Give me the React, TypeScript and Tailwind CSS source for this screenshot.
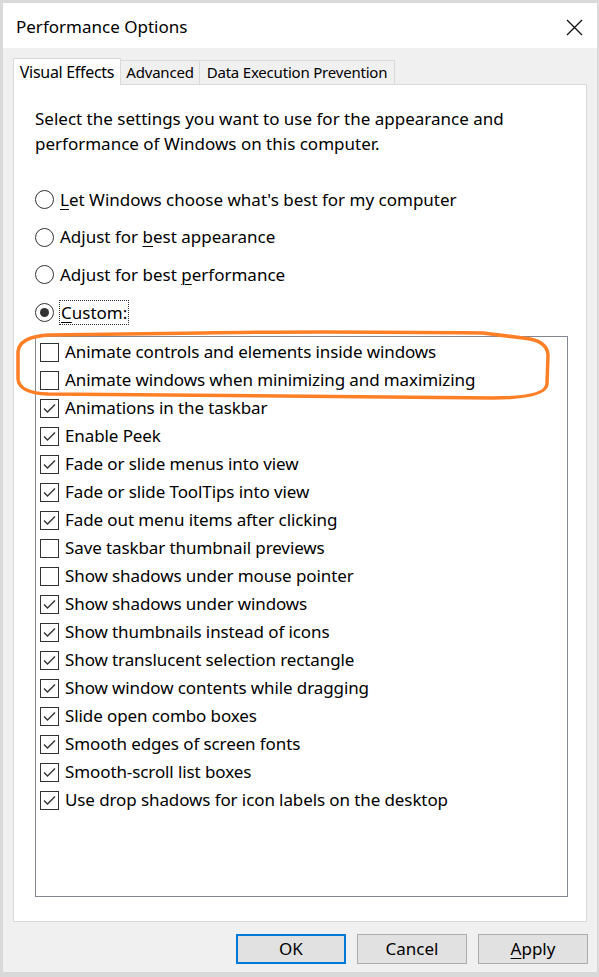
import React from "react";

const items: [string, boolean][] = [
  ["Animate controls and elements inside windows", false],
  ["Animate windows when minimizing and maximizing", false],
  ["Animations in the taskbar", true],
  ["Enable Peek", true],
  ["Fade or slide menus into view", true],
  ["Fade or slide ToolTips into view", true],
  ["Fade out menu items after clicking", true],
  ["Save taskbar thumbnail previews", false],
  ["Show shadows under mouse pointer", false],
  ["Show shadows under windows", true],
  ["Show thumbnails instead of icons", true],
  ["Show translucent selection rectangle", true],
  ["Show window contents while dragging", true],
  ["Slide open combo boxes", true],
  ["Smooth edges of screen fonts", true],
  ["Smooth-scroll list boxes", true],
  ["Use drop shadows for icon labels on the desktop", true],
];

function Radio({ checked, children }: { checked?: boolean; children: React.ReactNode }) {
  return (
    <div className="flex items-center h-[25px]">
      <div className="w-[19px] h-[19px] rounded-full border border-[#333] flex items-center justify-center bg-white">
        {checked && <div className="w-[9px] h-[9px] rounded-full bg-[#333]" />}
      </div>
      <div className="ml-[6px]">{children}</div>
    </div>
  );
}

function Check({ checked, label }: { checked: boolean; label: string }) {
  return (
    <div className="flex items-center h-[28px]">
      <div className="w-[19px] h-[19px] border border-[#333] bg-white flex items-center justify-center">
        {checked && (
          <svg width="17" height="17" viewBox="0 0 17 17">
            <path d="M3 8.5 L6.5 12 L14 4.5" fill="none" stroke="#333" strokeWidth="1.4" />
          </svg>
        )}
      </div>
      <span className="ml-[6px] tracking-[-0.1px]">{label}</span>
    </div>
  );
}

export default function App() {
  return (
    <div
      className="w-[599px] h-[977px] bg-[#d9d9d9] pt-[3px] pl-[3px] pr-[2px] overflow-hidden text-black"
      style={{ fontFamily: '"Noto Sans", "Open Sans", sans-serif' }}
    >
      <div className="relative h-[969px] flex flex-col bg-[#f0f0f0] text-[17px]">
        {/* title bar */}
        <div className="h-[45px] bg-white flex items-center justify-between pl-[13px] pr-[14px] pt-[3px]">
          <span className="text-[17px]">Performance Options</span>
          <svg width="17" height="17" viewBox="0 0 17 17">
            <path d="M1 1 L16 16 M16 1 L1 16" stroke="#111" strokeWidth="1.3" fill="none" />
          </svg>
        </div>
        {/* body */}
        <div className="flex flex-col pt-[10px] pl-[10px] pr-[10px]">
          {/* tabs */}
          <div className="flex items-end h-[27px] relative z-10 text-[15px] tracking-[-0.2px] whitespace-nowrap">
            <div className="shrink-0 w-[108px] h-[27px] bg-white border border-[#d9d9d9] border-b-0 flex items-center justify-center text-[16px] tracking-[-0.3px]">
              Visual Effects
            </div>
            <div className="shrink-0 w-[79px] h-[24px] mb-[1px] border border-[#d9d9d9] border-l-0 border-b-0 flex items-center justify-center">
              Advanced
            </div>
            <div className="shrink-0 w-[195px] h-[24px] mb-[1px] border border-[#d9d9d9] border-l-0 border-b-0 flex items-center justify-center">
              Data Execution Prevention
            </div>
          </div>
          {/* panel */}
          <div className="h-[838px] -mt-[1px] bg-white border border-[#d9d9d9] pl-[21px] pr-[18px] pt-[21px] flex flex-col">
            <p className="leading-[25px]">
              Select the settings you want to use for the appearance and performance of Windows on this computer.
            </p>
            <div className="flex flex-col gap-[12.7px] mt-[31px]">
              <Radio>
                <span className="underline underline-offset-[3px] decoration-1">L</span>et Windows choose what's best for my computer
              </Radio>
              <Radio>
                Adjust for <span className="underline underline-offset-[3px] decoration-1">b</span>est appearance
              </Radio>
              <Radio>
                Adjust for best <span className="underline underline-offset-[3px] decoration-1">p</span>erformance
              </Radio>
              <Radio checked>
                <span className="outline outline-1 outline-dotted outline-[#333] px-[1px]">
                  <span className="underline underline-offset-[3px] decoration-1">C</span>ustom:
                </span>
              </Radio>
            </div>
            <div className="mt-[11px] h-[561px] border border-[#828790] pl-[4px] pt-[1px] flex flex-col">
              {items.map(([l, c]) => (
                <Check key={l} label={l} checked={c} />
              ))}
            </div>
          </div>
          {/* buttons */}
          <div className="flex justify-end gap-[11px] mt-[12px] mr-[-1px]">
            <button className="w-[110px] h-[30px] bg-[#e1e1e1] border-2 border-[#0078d7]">OK</button>
            <button className="w-[110px] h-[30px] bg-[#e1e1e1] border border-[#adadad]">Cancel</button>
            <button className="w-[110px] h-[30px] bg-[#e1e1e1] border border-[#adadad]">
              <span className="underline underline-offset-[3px] decoration-1">A</span>pply
            </button>
          </div>
        </div>
        {/* annotation */}
        <svg className="absolute left-0 top-0 pointer-events-none" width="594" height="969">
          <path
            d="M45 332 Q16 334 15 349 L15 376 Q16 390 45 391 L490 395 Q543 395 544 381 L545 352 Q544 337 520 335 L480 330 Q300 328 200 330 Z"
            fill="none"
            stroke="#ff7f27"
            strokeWidth="3.5"
          />
        </svg>
      </div>
    </div>
  );
}
